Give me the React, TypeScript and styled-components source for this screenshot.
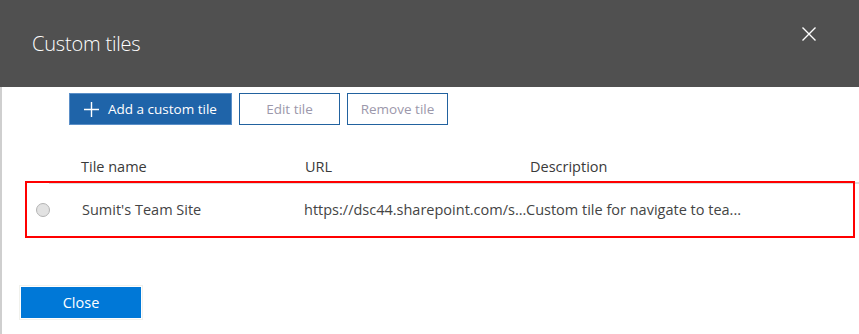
import React from "react";
import styled, { createGlobalStyle } from "styled-components";

const Global = createGlobalStyle`
  html, body { margin: 0; padding: 0; background: #ffffff; }
  body { font-family: "Open Sans", "Noto Sans", Arial, sans-serif; }
  * { box-sizing: border-box; }
`;

const Dialog = styled.div`
  width: 859px;
  height: 334px;
  display: flex;
  flex-direction: column;
  background: #fff;
  overflow: hidden;
`;

const Header = styled.header`
  height: 87px;
  flex: 0 0 87px;
  background: #505050;
  display: flex;
  justify-content: space-between;
  align-items: flex-start;
  padding: 0 40px 0 32px;
`;

const Title = styled.h1`
  margin: 30px 0 0;
  font-size: 20px;
  font-weight: 300;
  color: #ffffff;
  letter-spacing: -0.2px;
  line-height: 28px;
`;

const CloseX = styled.button`
  margin-top: 24px;
  width: 20px;
  height: 20px;
  padding: 0;
  border: none;
  background: transparent;
  display: flex;
  align-items: center;
  justify-content: center;
  cursor: pointer;
`;

const Body = styled.div`
  flex: 1;
  display: flex;
  flex-direction: column;
  border-left: 2px solid #cfcfcf;
`;

const Toolbar = styled.div`
  display: flex;
  gap: 7px;
  padding: 6px 0 0 67px;
`;

const ToolButton = styled.button<{ $primary?: boolean; $w: number }>`
  width: ${(p) => p.$w}px;
  height: 32px;
  display: flex;
  align-items: center;
  justify-content: center;
  gap: 9px;
  font-family: inherit;
  font-size: 13.5px;
  padding: 0;
  border: 1px solid ${(p) => (p.$primary ? "#5b8fc8" : "#22629f")};
  background: ${(p) => (p.$primary ? "#1f64a9" : "#ffffff")};
  color: ${(p) => (p.$primary ? "#ffffff" : "#9c98ab")};
  cursor: pointer;
`;

const Table = styled.div`
  margin-top: 26px;
  display: flex;
  flex-direction: column;
`;

const HeadRow = styled.div`
  display: grid;
  grid-template-columns: 79px 224px 225px 1fr;
  height: 33px;
  align-items: center;
  margin-left: 47px;
  border-bottom: 2px solid #dcdcdc;
  & > :first-child { grid-column: 2; }
`;

const HeadCell = styled.div`
  font-size: 14.5px;
  color: #3a3a3a;
  margin-left: -47px;
`;

const Highlight = styled.div`
  margin: -3px 4px 0 23px;
  height: 57px;
  border: 2px solid #ff0000;
  display: grid;
  grid-template-columns: 55px 222px 222px 1fr;
  align-items: center;
`;

const RadioCell = styled.div`
  display: flex;
  justify-content: flex-start;
  padding-left: 9px;
`;

const Radio = styled.span`
  display: block;
  width: 14px;
  height: 14px;
  border-radius: 50%;
  border: 1px solid #b4b4b4;
  background: #e2e2e2;
`;

const Cell = styled.div`
  font-size: 14.5px;
  color: #444444;
  white-space: nowrap;
  overflow: hidden;
`;

const Footer = styled.div`
  margin-top: 49px;
  padding-left: 19px;
`;

const PrimaryButton = styled.button`
  width: 120px;
  height: 31px;
  border: none;
  background: #0078d7;
  color: #ffffff;
  font-family: inherit;
  font-size: 14.5px;
  cursor: pointer;
  outline: 1px solid #f1f1ec;
  outline-offset: 1px;
`;

export default function App() {
  return (
    <>
      <Global />
      <Dialog>
        <Header>
          <Title>Custom tiles</Title>
          <CloseX aria-label="Close">
            <svg width="16" height="16" viewBox="0 0 16 16">
              <path d="M1.5 1.5 L14.5 14.5 M14.5 1.5 L1.5 14.5" stroke="#ffffff" strokeWidth="1.4" fill="none" />
            </svg>
          </CloseX>
        </Header>
        <Body>
          <Toolbar>
            <ToolButton $primary $w={163}>
              <svg width="15" height="15" viewBox="0 0 15 15">
                <path d="M7.5 0 V15 M0 7.5 H15" stroke="#ffffff" strokeWidth="1.4" fill="none" />
              </svg>
              <span>Add a custom tile</span>
            </ToolButton>
            <ToolButton $w={101}>Edit tile</ToolButton>
            <ToolButton $w={101}>Remove tile</ToolButton>
          </Toolbar>
          <Table>
            <HeadRow>
              <HeadCell>Tile name</HeadCell>
              <HeadCell>URL</HeadCell>
              <HeadCell>Description</HeadCell>
            </HeadRow>
            <Highlight>
              <RadioCell>
                <Radio />
              </RadioCell>
              <Cell>Sumit's Team Site</Cell>
              <Cell>https://dsc44.sharepoint.com/s...</Cell>
              <Cell>Custom tile for navigate to tea...</Cell>
            </Highlight>
          </Table>
          <Footer>
            <PrimaryButton>Close</PrimaryButton>
          </Footer>
        </Body>
      </Dialog>
    </>
  );
}
